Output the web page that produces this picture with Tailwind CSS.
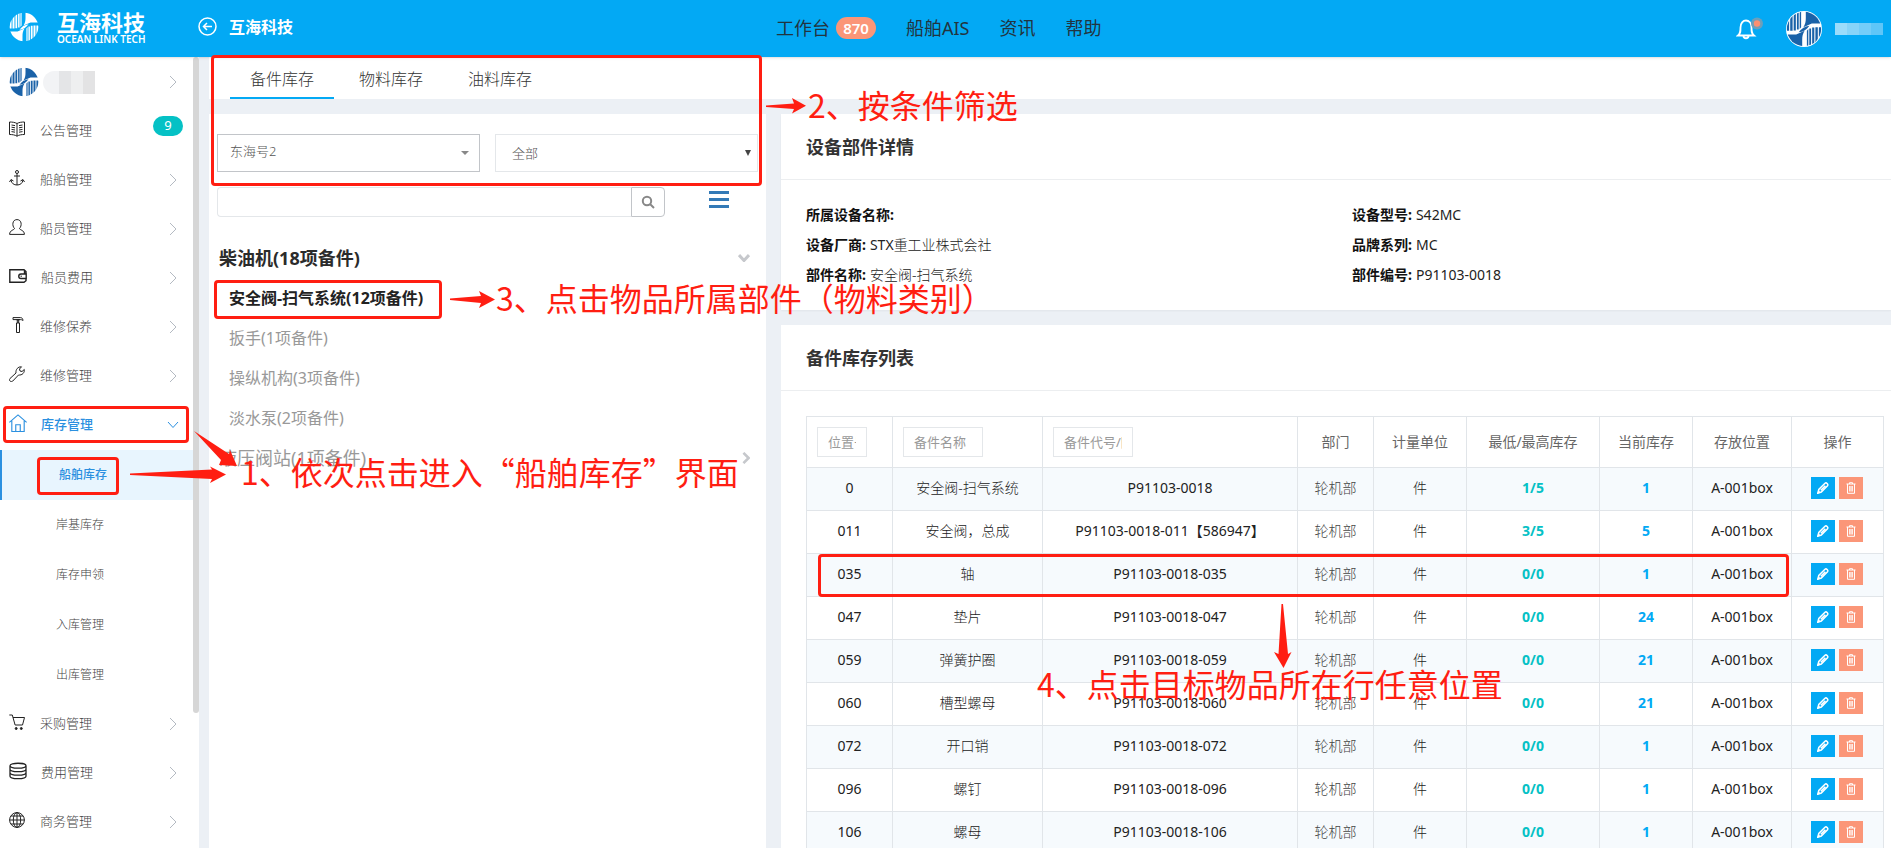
<!DOCTYPE html>
<html lang="zh-CN">
<head>
<meta charset="utf-8">
<title>互海科技 - 船舶库存</title>
<script src="https://cdn.jsdelivr.net/npm/@tailwindcss/browser@4"></script>
</head>
<body class="font-['Noto_Sans','Noto_Sans_CJK_SC',sans-serif] text-sm text-[#333]">
<svg class="absolute size-0" aria-hidden="true">
  <clipPath id="disc"><circle cx="15" cy="15" r="14.300"/></clipPath>
  <symbol id="logo" viewBox="0 0 30 30">
    <g fill="currentColor" clip-path="url(#disc)">
      <path d="M16.500 0H30v10.500H21.500L14.500 13.500C16 11 16.500 9 16.500 6z"/>
      <path d="M13.500 30H0V19.500h8.500l7-3C14 19 13.500 21 13.500 24z"/>
      <path d="M0 0h2.600v16.500H0zM3.500 0h2v16.500h-2zM6.400 0h1.800v16.300H6.400zM9.100 0h1.500v15.500H9.100zM11.400 0h1.200v13.500l-1.200 1.500z"/>
      <path d="M30 30h-2.600V13.500H30zM26.500 30h-2V13.500h2zM23.600 30h-1.800V13.700h1.800zM20.900 30h-1.500V14.500h1.500zM18.600 30h-1.200V16.500l1.200-1.500z"/>
      <path d="M10.500 17.800C12.500 14.800 15.500 12.700 19.500 12.200 17.500 15.200 14.500 17.300 10.500 17.800z"/>
    </g>
  </symbol>
  <symbol id="book" viewBox="0 0 16 16"><path d="M8 2.500C6 1.300 3 1 .5 1v12.500c2.500 0 5.500.3 7.500 1.700 2-1.400 5-1.700 7.500-1.700V1C13 1 10 1.300 8 2.500zM8 2.500v12.700M2.500 4l3.500.6M2.500 6.200l3.500.6M2.500 8.400l3.500.6M2.500 10.600l3.500.6M13.500 4l-3.500.6M13.500 6.200l-3.500.6M13.500 8.400L10 9M13.500 10.600l-3.500.6"/></symbol>
  <symbol id="anchor" viewBox="0 0 16 16"><circle cx="8" cy="2" r="1.500"/><path d="M8 3.500V15M5 6h6M.5 12L2 9.500 4.500 11M15.500 12L14 9.500 11.500 11M2 10c.5 3.500 3 5 6 5s5.500-1.500 6-5"/></symbol>
  <symbol id="user" viewBox="0 0 16 16"><path d="M5.500 9.500C3 7 3 .6 8 .6s5 6.400 2.500 8.900c0 1.500 4.900 1.500 4.900 5.900H.6c0-4.400 4.900-4.400 4.900-5.900z"/></symbol>
  <symbol id="wallet" viewBox="0 0 18 16"><path stroke-width="1.400" d="M17 6V3.500L15 1.700H.8v12.500H15l2-1.500V10.500M15.500 1.700V5.500M17.200 6H12a2.200 2.200 0 0 0 0 4.500h5.200z"/><path d="M11.500 8.200h1.500"/></symbol>
  <symbol id="hammer" viewBox="0 0 16 16"><path d="M4 .6h7.500c1.500 0 2.300 1 2.500 3-1-1-2-1-3-1H4zM7.500 2.800h3M7.500 6h3v9.500h-3zM8.300 3v3M9.700 3v3"/></symbol>
  <symbol id="wrench" viewBox="0 0 16 16"><path d="M1 15c-1-1-.5-2 0-2.500l6-5.500C6.500 3.500 9 .5 12.500.8L10.500 3l.5 2 2 .5 2.300-2c.5 3-2 6-5.800 5.500L3.800 15c-.8.800-2 .8-2.800 0z"/></symbol>
  <symbol id="house" viewBox="0 0 16 16"><path d="M.3 7.500L8 .8l7.700 6.700M2.500 6v9.500h11V6M6 15.500V9.500h4v6"/></symbol>
  <symbol id="cart" viewBox="0 0 16 16"><path d="M.3 1h3l2.800 10h7.400L15.500 3.500H4"/><circle cx="7.200" cy="14.500" r="1" fill="currentColor"/><circle cx="12.300" cy="14.500" r="1" fill="currentColor"/></symbol>
  <symbol id="coins" viewBox="0 0 18 17"><path stroke-width="1.300" d="M1 3.200C1 -.1 17 -.1 17 3.200S1 6.500 1 3.200zM1 3.200v10.500c0 3.300 16 3.300 16 0V3.200M1 6.700c0 3.300 16 3.300 16 0M1 10.200c0 3.300 16 3.300 16 0"/></symbol>
  <symbol id="globe" viewBox="0 0 16 16"><circle cx="8" cy="8" r="7.400"/><ellipse cx="8" cy="8" rx="3.700" ry="7.400"/><path d="M8 .6v14.800M.6 8h14.800M2 4h12M2 12h12"/></symbol>
  <symbol id="right" viewBox="0 0 8 14"><path d="M1 1l6 6-6 6"/></symbol>
  <symbol id="down" viewBox="0 0 12 8"><path d="M1 1l5 5.500L11 1"/></symbol>
  <symbol id="pencil" viewBox="0 0 12 12"><path d="M.8 11.200l1-3.700L8 1.300c1.300-1.200 3.600 1 2.500 2.500L4.300 10zM3.800 8.200l4.500-4.500" fill="none" stroke="currentColor" stroke-width="1.500"/><path d="M.3 11.800l1.200-3.500 2.200 2.200z" fill="currentColor"/></symbol>
  <symbol id="trash" viewBox="0 0 10 12"><path d="M.5 2h9M3.500 2V.7h3V2M1.500 2v9.300h7V2M3.700 4v5.500M6.300 4v5.500M5 4v5.500" fill="none" stroke="currentColor" stroke-width="1"/></symbol>
</svg>

<div class="relative flex h-screen flex-col overflow-hidden bg-[#ecf0f5]">
  <header class="z-10 flex h-[57px] shrink-0 items-center bg-[#03a9f4] text-white shadow">
    <div class="flex w-[776px] items-center">
      <a href="#" class="flex w-[198px] items-center gap-[18px] pb-1 pl-[9px]">
        <svg class="size-[30px]"><use href="#logo"/></svg>
        <span class="flex flex-col">
          <span class="text-[22px] leading-6 font-bold">互海科技</span>
          <span class="text-[10px] leading-[10px] font-semibold">OCEAN LINK TECH</span>
        </span>
      </a>
      <a href="#" class="flex items-center gap-3 pb-1 text-base leading-5 font-bold">
        <svg class="size-[19px]" viewBox="0 0 19 19" fill="none" stroke="currentColor" stroke-width="1.500"><circle cx="9.500" cy="9.500" r="8.500"/><path d="M14 9.500H5.500M9 6L5.500 9.500 9 13"/></svg>
        互海科技
      </a>
    </div>
    <nav class="flex grow items-center gap-[30px] pb-0.5 text-lg leading-6 text-[#22343f]">
      <a href="#" class="flex items-center gap-1.5">工作台 <span class="flex h-[22px] w-10 items-center justify-center rounded-full bg-[#fb9678] text-[15px] font-semibold text-white">870</span></a>
      <a href="#">船舶AIS</a><a href="#">资讯</a><a href="#">帮助</a>
    </nav>
    <div class="flex items-center pr-2">
      <button type="button" aria-label="通知" class="mr-[22px]">
        <svg class="h-6 w-7" viewBox="0 0 28 24" fill="none"><path d="M2 18.500c2.500-2 2.500-4 2.500-8C4.500 6 7 3.500 10 3.500s5.500 2.500 5.500 7c0 4 0 6 2.500 8zM7.500 19c0 3 5 3 5 0" stroke="#fff" stroke-width="1.800"/><circle cx="21" cy="6.500" r="6" fill="#6c9fba"/><circle cx="21" cy="6.500" r="3.200" fill="#fb8f70"/></svg>
      </button>
      <svg class="mr-[13px] size-9 rounded-full bg-white text-[#1a62a8]"><use href="#logo"/></svg>
      <span class="flex h-3 w-12"><i class="w-3 bg-[#9bdcfb]"></i><i class="w-3 bg-[#87d4f9]"></i><i class="w-3 bg-[#74cdf9]"></i><i class="w-3 bg-[#5fc6f8]"></i></span>
    </div>
  </header>

  <div class="flex min-h-0 grow">
    <aside class="relative w-[199px] shrink-0 overflow-hidden bg-white">
      <a href="#" class="flex h-[50px] items-center pr-[22px] pl-[9px]">
        <svg class="size-[30px] rounded-full text-[#1a62a8]"><use href="#logo"/></svg>
        <span class="ml-1 flex h-[23px] w-[52px] overflow-hidden rounded-l-full rounded-r-md"><i class="w-4 bg-[#f2f3f5]"></i><i class="w-3 bg-[#e4e5e7]"></i><i class="w-3 bg-[#eeeff0]"></i><i class="w-3 bg-[#e3e3e4]"></i></span>
        <svg class="ml-auto h-3.5 w-2 fill-none stroke-[#b4bac2]"><use href="#right"/></svg>
      </a>
      <nav id="menu"></nav>
      <div class="absolute top-0 right-0 h-[656px] w-1.5 rounded-full bg-[#d6d6d6]"></div>
    </aside>

    <main class="flex min-w-0 grow flex-col pl-2.5">
      <div class="flex h-[42px] shrink-0 gap-[5px] bg-white pl-[21px] text-base font-light text-[#333]" role="tablist">
        <button type="button" role="tab" aria-selected="true" class="border-b-2 border-[#03a9f4] px-5 pt-1">备件库存</button>
        <button type="button" role="tab" class="border-b-2 border-transparent px-5 pt-1">物料库存</button>
        <button type="button" role="tab" class="border-b-2 border-transparent px-5 pt-1">油料库存</button>
      </div>
      <div class="mt-[15px] flex min-h-0 grow gap-[15px]">
        <section class="w-[557px] shrink-0 bg-white px-2 pt-5">
          <div class="flex gap-[15px]">
            <div class="relative grow basis-0">
              <select aria-label="船舶" class="h-[38px] w-full appearance-none border border-[#c2c5c9] bg-white pb-1 pl-3 text-[13px] font-light text-[#555]"><option>东海号2</option></select>
              <i class="absolute top-[17px] right-[11px] border-x-4 border-t-4 border-x-transparent border-t-[#888]"></i></div>
            <div class="relative grow basis-0">
              <select aria-label="类别" class="h-[38px] w-full appearance-none border border-[#e4e7ea] bg-white pl-4 text-[13px] font-light text-[#555]"><option>全部</option></select>
              <i class="absolute top-4 right-[7px] border-x-3 border-t-6 border-x-transparent border-t-[#444]"></i></div>
          </div>
          <form class="mt-[15px] flex h-[30px] items-center">
            <input aria-label="搜索备件" class="h-full w-[414px] rounded-l-sm border border-r-0 border-[#e4e7ea] px-3">
            <button type="button" aria-label="搜索" class="flex h-full w-[34px] items-center justify-center rounded-r-sm border border-[#c2c5c9]">
              <svg class="size-3.5" viewBox="0 0 14 14" fill="none" stroke="#888" stroke-width="2"><circle cx="6" cy="6" r="4.200"/><path d="M9 9l4 4"/></svg></button>
            <button type="button" aria-label="列表" class="mb-1.5 ml-11 flex w-5 flex-col gap-1"><i class="h-[3px] bg-[#337ab7]"></i><i class="h-[3px] bg-[#337ab7]"></i><i class="h-[3px] bg-[#337ab7]"></i></button>
          </form>
          <div class="mt-[21px] flex h-10 items-center justify-between pr-2 pl-0.5 text-lg font-bold text-[#2b2b2b]">柴油机(18项备件)
            <svg class="h-2 w-3 fill-none stroke-[#c6c8cc] stroke-3"><use href="#down"/></svg></div>
          <ul class="pl-3 text-base text-[#999]">
            <li class="flex h-10 items-center"><a href="#" class="font-bold text-[#222]">安全阀-扫气系统(12项备件)</a></li>
            <li class="flex h-10 items-center"><a href="#">扳手(1项备件)</a></li>
            <li class="flex h-10 items-center"><a href="#">操纵机构(3项备件)</a></li>
            <li class="flex h-10 items-center"><a href="#">淡水泵(2项备件)</a></li>
          </ul>
          <div class="flex h-10 items-center justify-between pr-2 pl-0.5 text-lg text-[#999]">液压阀站(1项备件)
            <svg class="h-3 w-2 fill-none stroke-[#c6c8cc] stroke-3"><use href="#right"/></svg></div>
        </section>

        <div class="flex min-w-0 grow flex-col gap-[15px]">
          <section class="shrink-0 bg-white pb-5 shadow-xs">
            <h2 class="flex h-[66px] items-center border-b border-[#eceef0] pl-[25px] text-lg font-bold">设备部件详情</h2>
            <dl class="grid grid-cols-[546px_1fr] pt-5 pl-[25px] leading-[30px] text-[#222]">
              <div class="flex gap-1"><dt class="font-bold text-[#111]">所属设备名称:</dt><dd></dd></div>
              <div class="flex gap-1"><dt class="font-bold text-[#111]">设备型号:</dt><dd>S42MC</dd></div>
              <div class="flex gap-1"><dt class="font-bold text-[#111]">设备厂商:</dt><dd>STX<span class="font-light">重工业株式会社</span></dd></div>
              <div class="flex gap-1"><dt class="font-bold text-[#111]">品牌系列:</dt><dd>MC</dd></div>
              <div class="flex gap-1"><dt class="font-bold text-[#111]">部件名称:</dt><dd class="font-light">安全阀-扫气系统</dd></div>
              <div class="flex gap-1"><dt class="font-bold text-[#111]">部件编号:</dt><dd>P91103-0018</dd></div>
            </dl>
          </section>
          <section class="min-h-0 grow overflow-hidden bg-white">
            <h2 class="flex h-[66px] items-center border-b border-[#eceef0] pl-[25px] text-lg font-bold">备件库存列表</h2>
            <div class="pt-[25px] pr-[7px] pl-[25px]">
              <table class="w-full table-fixed border-collapse text-center [&_td]:border [&_td]:border-[#e1e5e9] [&_td]:pb-0.5 [&_th]:border [&_th]:border-[#e1e5e9]">
                <colgroup><col class="w-[86px]"><col class="w-[150px]"><col class="w-[255px]"><col class="w-[76px]"><col class="w-[93px]"><col class="w-[133px]"><col class="w-[93px]"><col class="w-[99px]"><col></colgroup>
                <thead><tr class="h-[51px] [&_th]:font-normal [&_th]:text-[#666]">
                  <th class="px-2.5 text-left"><input aria-label="位置号" placeholder="位置号" class="block h-[30px] w-[50px] border border-[#e4e7ea] px-2.5 text-[13px] placeholder:text-[#999]"></th>
                  <th class="px-2.5 text-left"><input aria-label="备件名称" placeholder="备件名称" class="block h-[30px] w-20 border border-[#e4e7ea] px-2.5 text-[13px] placeholder:text-[#999]"></th>
                  <th class="px-2.5 text-left"><input aria-label="备件代号/图号" placeholder="备件代号/图号" class="block h-[30px] w-20 border border-[#e4e7ea] px-2.5 text-[13px] placeholder:text-[#999]"></th>
                  <th>部门</th><th>计量单位</th><th>最低/最高库存</th><th>当前库存</th><th>存放位置</th><th>操作</th>
                </tr></thead>
                <tbody id="rows"></tbody>
              </table>
            </div>
          </section>
        </div>
      </div>
    </main>
  </div>

  <!-- 操作步骤标注 -->
  <div class="pointer-events-none absolute inset-0 z-20 font-['Noto_Sans_CJK_SC',sans-serif] text-[32px] leading-10 whitespace-nowrap text-[#ff1e12]">
    <div class="absolute top-[55px] left-[211px] h-[131px] w-[551px] rounded-sm border-3 border-[#ff1e12]"></div>
    <div class="absolute top-[406px] left-[3px] h-[37px] w-[186px] rounded-sm border-3 border-[#ff1e12]"></div>
    <div class="absolute top-[457px] left-[37px] h-[38px] w-[82px] rounded-sm border-3 border-[#ff1e12]"></div>
    <div class="absolute top-[280px] left-[214px] h-[39px] w-[228px] rounded-sm border-3 border-[#ff1e12]"></div>
    <div class="absolute top-[554px] left-[818px] h-[43px] w-[971px] rounded-sm border-3 border-[#ff1e12]"></div>
    <svg class="absolute top-0 left-0 h-[848px] w-[1891px] fill-[#ff1e12]">
      <path d="M766 105.500L794 103.500 792 98 806 105.700 792 113.500 794 109 766 107z"/>
      <path d="M450 298.500L481 296 479 291 495 299.500 479 308 481 303 450 300z"/>
      <path d="M130 473.500L212 469.500 210 466.500 226 474.500 210 483 212 479 130 475z"/>
      <path d="M194 431L229 454 230 450 237 466 219 465 221 460z"/>
      <path d="M1281.500 604L1278.500 654 1274 652 1283.500 668 1291.500 652 1288 654 1283 604z"/>
    </svg>
    <p class="absolute top-[451px] left-[241px]">1、依次点击进入“船舶库存”界面</p>
    <p class="absolute top-[84px] left-[808px]">2、按条件筛选</p>
    <p class="absolute top-[277px] left-[496px]">3、点击物品所属部件（物料类别）</p>
    <p class="absolute top-[663px] left-[1037px]">4、点击目标物品所在行任意位置</p>
  </div>
</div>

<script>
const items = [
  ['book', '公告管理'], ['anchor', '船舶管理'], ['user', '船员管理'], ['wallet', '船员费用'], ['hammer', '维修保养'], ['wrench', '维修管理'],
  ['house', '库存管理', ['船舶库存', '岸基库存', '库存申领', '入库管理', '出库管理']],
  ['cart', '采购管理'], ['coins', '费用管理'], ['globe', '商务管理']
];
const wide = ['wallet', 'house', 'coins'];
document.getElementById('menu').innerHTML = items.map(([icon, name, subs], i) => {
  const end = i === 0
    ? '<span class="mr-[-6px] mb-2.5 ml-auto flex h-5 w-[30px] items-center justify-center rounded-full bg-[#05c1c5] text-[13px] font-normal text-white">9</span>'
    : subs ? '<svg class="-mr-0.5 ml-auto h-2 w-3 fill-none stroke-current"><use href="#down"/></svg>'
    : '<svg class="ml-auto h-3.5 w-2 fill-none stroke-[#b4bac2]"><use href="#right"/></svg>';
  const row = `<a href="#" class="flex h-[49px] items-center pr-[22px] pb-0.5 pl-[9px] text-[13px] ${subs ? 'font-medium text-[#2b90e0]' : 'font-light text-[#444]'}">
    <svg class="mb-1 fill-none ${wide.includes(icon) ? 'mr-3.5 size-[18px]' : 'mr-[15px] size-4'} ${subs ? 'stroke-current' : 'stroke-[#222] text-[#222]'}"><use href="#${icon}"/></svg>${name}${end}</a>`;
  const children = (subs || []).map((s, j) => j === 0
    ? `<a href="#" class="flex h-[50px] items-center border-l-2 border-[#2b90e0] bg-[#e8f5fe] pl-[57px] text-xs font-medium text-[#2b90e0]">${s}</a>`
    : `<a href="#" class="flex h-[50px] items-center pl-14 text-xs font-light text-[#444]">${s}</a>`).join('');
  return row + children;
}).join('');

const rows = [
  ['0', '安全阀-扫气系统', 'P91103-0018', '1/5', '1'],
  ['011', '安全阀，总成', 'P91103-0018-011【586947】', '3/5', '5'],
  ['035', '轴', 'P91103-0018-035', '0/0', '1'],
  ['047', '垫片', 'P91103-0018-047', '0/0', '24'],
  ['059', '弹簧护圈', 'P91103-0018-059', '0/0', '21'],
  ['060', '槽型螺母', 'P91103-0018-060', '0/0', '21'],
  ['072', '开口销', 'P91103-0018-072', '0/0', '1'],
  ['096', '螺钉', 'P91103-0018-096', '0/0', '1'],
  ['106', '螺母', 'P91103-0018-106', '0/0', '1']
];
document.getElementById('rows').innerHTML = rows.map(([pos, name, code, range, stock]) => `
  <tr class="h-[43px] text-[#222] odd:bg-[#f6fafd]">
    <td>${pos}</td><td class="font-light">${name}</td><td>${code}</td><td class="font-light text-[#444]">轮机部</td><td class="font-light">件</td>
    <td class="font-bold text-[#05c1c5]">${range}</td><td class="font-bold text-[#03a9f4]">${stock}</td><td>A-001box</td>
    <td><div class="flex justify-center gap-1 pr-0.5">
      <button type="button" aria-label="编辑" class="flex h-[22px] w-6 items-center justify-center bg-[#03a9f4] text-white"><svg class="size-3"><use href="#pencil"/></svg></button>
      <button type="button" aria-label="删除" class="flex h-[22px] w-6 items-center justify-center bg-[#fb9678] text-white"><svg class="h-3 w-2.5"><use href="#trash"/></svg></button>
    </div></td>
  </tr>`).join('');
</script>
</body>
</html>
